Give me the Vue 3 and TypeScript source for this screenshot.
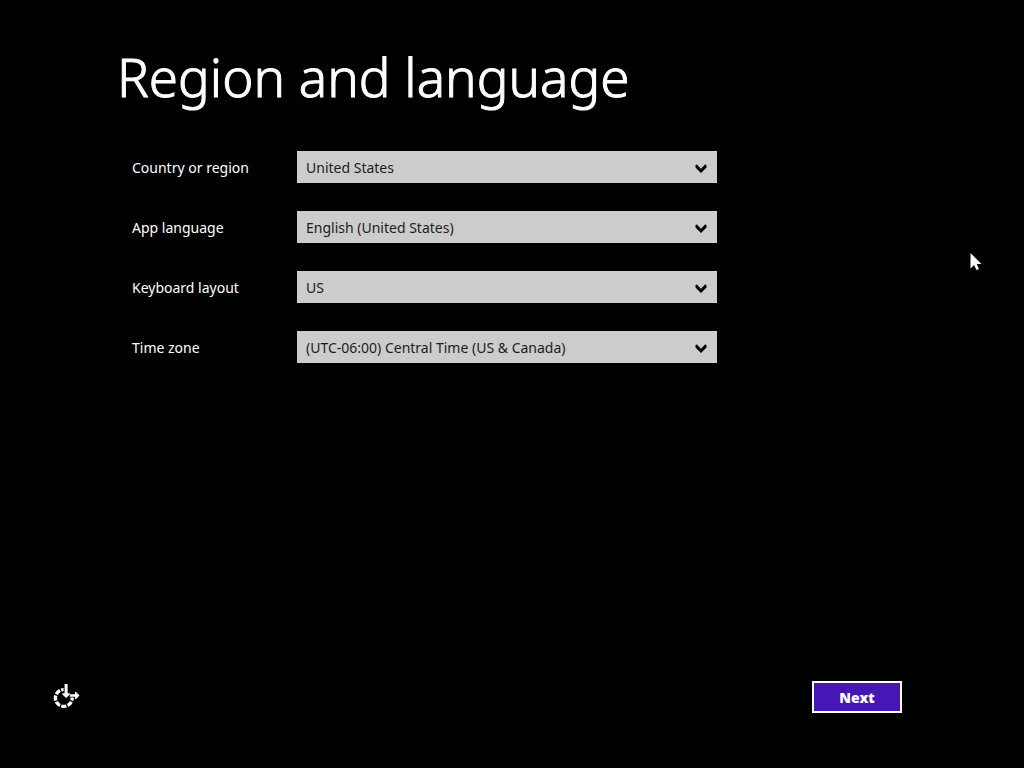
<script setup lang="ts">
import { reactive } from 'vue'

interface Field {
  id: string
  label: string
  value: string
  options: string[]
}

const fields = reactive<Field[]>([
  { id: 'country', label: 'Country or region', value: 'United States', options: ['United States'] },
  { id: 'language', label: 'App language', value: 'English (United States)', options: ['English (United States)'] },
  { id: 'keyboard', label: 'Keyboard layout', value: 'US', options: ['US'] },
  {
    id: 'timezone',
    label: 'Time zone',
    value: '(UTC-06:00) Central Time (US & Canada)',
    options: ['(UTC-06:00) Central Time (US & Canada)'],
  },
])
</script>

<template>
  <div class="setup">
    <main>
      <h1>Region and language</h1>
      <form id="region-form" class="fields" @submit.prevent>
        <div v-for="field in fields" :key="field.id" class="row">
          <label :for="field.id">{{ field.label }}</label>
          <div class="picker">
            <select :id="field.id" v-model="field.value">
              <option v-for="option in field.options" :key="option">{{ option }}</option>
            </select>
            <svg class="chevron" viewBox="0 0 12 10" aria-hidden="true">
              <path d="M0.5 2 L2 1.6 L6 5.8 L10 1.6 L11.5 2 V4.6 L6 10 L0.5 4.6 Z" />
            </svg>
          </div>
        </div>
      </form>
    </main>

    <footer>
      <button type="button" class="access" aria-label="Ease of access">
        <svg viewBox="0 1 30 30" aria-hidden="true">
          <circle class="ring" cx="13.8" cy="18" r="8.4" pathLength="80" />
          <path class="gap" d="M13.6 14 V7 H26 V17.5 H20 Z" />
          <path class="mark" d="M14.6 4 H17.6 V13.2 H19.8 V14.4 L16.1 18 L12.4 14.4 V13.2 H14.6 Z" />
          <path class="mark" d="M20.3 14.2 H25 V12 H26 L29.5 15.5 L26 19 H25 V16.8 H19.5 Z" />
        </svg>
      </button>
      <button type="submit" form="region-form" class="next">Next</button>
    </footer>

    <svg class="cursor" viewBox="0 0 12 18" aria-hidden="true">
      <path d="M0.5 0 V15.5 L4 12 L6.5 17 L9 16 L6.8 11 H11.5 Z" />
    </svg>
  </div>
</template>

<style>
body {
  margin: 0;
  background: #000;
}
</style>

<style scoped>
.setup {
  position: relative;
  display: flex;
  flex-direction: column;
  justify-content: space-between;
  box-sizing: border-box;
  min-height: 100vh;
  padding: 39px 122px 55px 50px;
  background: #000;
  color: #fff;
  font-family: "Noto Sans", "Open Sans", sans-serif;
  font-size: 14px;
}

main {
  padding-left: 67px;
}

h1 {
  margin: 0 0 36px;
  font-size: 53px;
  font-weight: 300;
  line-height: 76px;
  white-space: nowrap;
  -webkit-text-stroke: 1px #fff;
}

.fields {
  display: grid;
  gap: 28px;
  max-width: 585px;
  padding-left: 15px;
}

.row {
  display: grid;
  grid-template-columns: 165px 1fr;
  align-items: center;
}

.picker {
  position: relative;
}

select {
  display: block;
  width: 100%;
  height: 32px;
  padding: 0 36px 0 9px;
  border: 0;
  border-radius: 0;
  appearance: none;
  background: #ccc;
  color: #1c1c1c;
  font: inherit;
}

.chevron {
  position: absolute;
  top: 12px;
  right: 10px;
  width: 12px;
  height: 10px;
  fill: #000;
  pointer-events: none;
}

footer {
  display: flex;
  align-items: flex-start;
  justify-content: space-between;
}

.access {
  width: 30px;
  height: 30px;
  padding: 0;
  border: 0;
  background: none;
}

.access svg {
  display: block;
}

.ring {
  fill: none;
  stroke: #fff;
  stroke-width: 3.4;
  stroke-dasharray: 8 2;
  stroke-dashoffset: 4;
}

.gap {
  fill: #000;
}

.mark {
  fill: #fff;
}

.next {
  width: 90px;
  height: 32px;
  padding: 0;
  border: 2px solid #fff;
  background: #4617b4;
  color: #fff;
  font: inherit;
  font-weight: 900;
}

.cursor {
  position: absolute;
  top: 253px;
  left: 970px;
  width: 12px;
  height: 18px;
  fill: #fff;
  pointer-events: none;
}
</style>
